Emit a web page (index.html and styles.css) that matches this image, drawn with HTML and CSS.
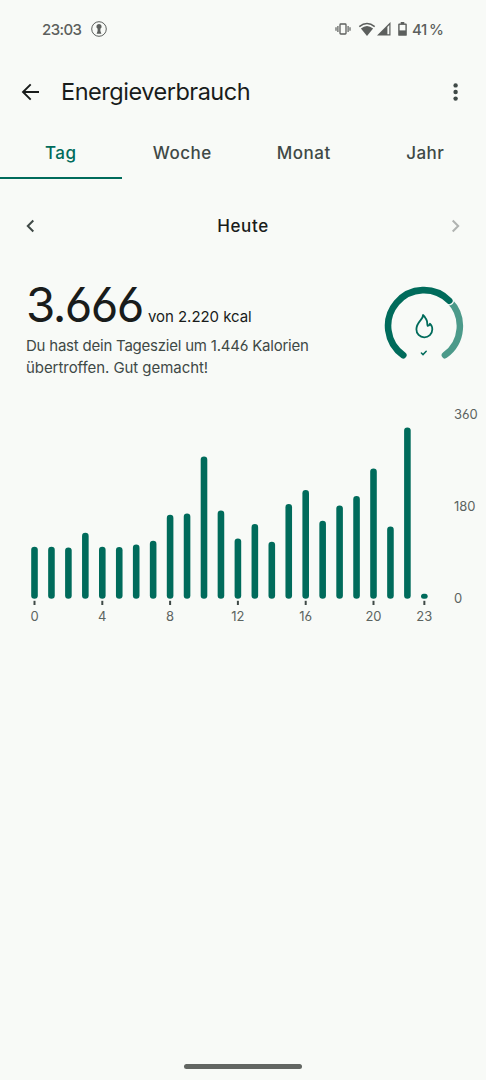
FILE: index.html
```html
<!DOCTYPE html>
<html lang="de">
<head>
  <meta charset="UTF-8" />
  <meta name="viewport" content="width=device-width, initial-scale=1.0"/>
  <title>Energieverbrauch</title>
  <link rel="stylesheet" href="styles.css">
</head>
<body>

  <div class="status-bar">
    <span class="clock">23:03</span>
    <svg class="icon-key" width="16" height="16" viewBox="0 0 16 16">
      <circle cx="8" cy="8" r="7.3" fill="none" stroke="#5c5f5d" stroke-width="1"/>
      <path d="M8 3a2.6 2.6 0 0 0-1.4 4.8V10l-1 2.8h4.8L9.4 10V7.8A2.6 2.6 0 0 0 8 3z" fill="#5c5f5d"/>
    </svg>
    <svg class="icon-vibrate" width="16" height="12" viewBox="0 0 16 12">
      <rect x="5" y="1" width="6" height="10" rx=".8" fill="none" stroke="#5c5f5d" stroke-width="1.3"/>
      <path d="M2.9 3v6M1 4.3v3.4M13.1 3v6M15 4.3v3.4" stroke="#5c5f5d" stroke-width="1.2"/>
    </svg>
    <svg class="icon-wifi" width="18" height="15" viewBox="0 0 18 15">
      <path d="M1.3 4.7Q9-1.7 16.7 4.7" fill="none" stroke="#5c5f5d" stroke-width="1.5"/>
      <path d="M2.9 6.6Q9 1.2 15.1 6.6L9 14z" fill="#5c5f5d"/>
    </svg>
    <svg class="icon-signal" width="14" height="14" viewBox="0 0 14 14">
      <path d="M13.5 0v13.5H0z" fill="#5c5f5d"/>
      <path d="M10.4 4.9l1.9-1.9v9.3h-1.9z" fill="#f8faf7"/>
    </svg>
    <svg class="icon-battery" width="9" height="14" viewBox="0 0 9 14">
      <path d="M2.7 0h3.6v1.5h1.6q.9 0 .9.9v10.5q0 .9-.9.9H1.100q-.9 0-.9-.9V2.400q0-.9.9-.9h1.600z" fill="#5c5f5d"/>
      <path d="M1.600 2.900h5.800v5.500H1.600z" fill="#f8faf7"/>
    </svg>
    <span class="battery-text">41&#8201;%</span>
  </div>

  <header class="top-bar">
    <svg width="18" height="18" viewBox="0 0 18 18" fill="none" stroke="#191c1b" stroke-width="1.9">
      <path d="M18 9H2M9.7 1.3L2 9l7.7 7.7"/>
    </svg>
    <h1>Energieverbrauch</h1>
    <svg class="menu" width="6" height="18" viewBox="0 0 6 18" fill="#3f4946">
      <circle cx="2.6" cy="2.4" r="2.2"/><circle cx="2.6" cy="9" r="2.2"/><circle cx="2.6" cy="15.6" r="2.2"/>
    </svg>
  </header>

  <nav class="tabs">
    <a class="tab active">Tag</a>
    <a class="tab">Woche</a>
    <a class="tab">Monat</a>
    <a class="tab">Jahr</a>
  </nav>

  <div class="day-nav">
    <svg width="9" height="14" viewBox="0 0 9 14" fill="none" stroke="#3f4946" stroke-width="2">
      <path d="M7.3 1.5L1.8 7l5.5 5.5"/>
    </svg>
    <span class="day">Heute</span>
    <svg width="9" height="14" viewBox="0 0 9 14" fill="none" stroke="#b0b3b1" stroke-width="2">
      <path d="M1.7 1.5L7.2 7l-5.500 5.500"/>
    </svg>
  </div>

  <section class="summary">
    <div class="summary-text">
      <div class="total"><span class="value">3.666</span><span class="goal">von 2.220 kcal</span></div>
      <p class="line-1">Du hast dein Tagesziel um 1.446 Kalorien</p>
      <p class="line-2">übertroffen. Gut gemacht!</p>
    </div>
    <svg class="gauge" width="80" height="76" viewBox="0 0 80 76" fill="none" stroke-linecap="round">
      <path d="M65.3 14.7A35.8 35.8 0 0 1 60.9 69.2" stroke="#4c9a8a" stroke-width="6.5"/>
      <path d="M19.3 69.2A35.8 35.8 0 1 1 65.3 14.7" stroke="#f8faf7" stroke-width="9.5"/>
      <path d="M19.3 69.2A35.8 35.8 0 1 1 65.3 14.7" stroke="#006b5b" stroke-width="6.6"/>
      <path d="M39 29c.6 4.400-6.600 6.600-6.600 14.200a7.900 7.900 0 0 0 15.900.3c0-2.200-.9-4.600-2.400-5.800-.2 1.300-.9 2-2.200 2.200-1-2.300.2-3.700-1.500-6.600-.6-1.500-1.800-3.100-3.200-4.300z" stroke="#006b5b" stroke-width="1.800" stroke-linejoin="round"/>
      <path d="M37.400 67l1.600 1.600 3.200-3.300" stroke="#006b5b" stroke-width="1.500"/>
    </svg>
  </section>

  <section class="chart">
    <svg id="hours" width="420" height="220" viewBox="0 0 420 220"></svg>
    <div class="scale">
      <span>360</span>
      <span>180</span>
      <span>0</span>
    </div>
  </section>

  <div class="home-indicator"></div>

  <script>
    // Balkenhöhe pro Stunde in px
    const heights = [52, 52, 51.3, 66, 52, 51.7, 54.3, 58, 84, 85.3, 142.3, 88.3,
      60.3, 74.7, 57, 94.7, 108.7, 78, 93.3, 102.7, 130.3, 72.3, 171.3, 5];
    const labels = [0, 4, 8, 12, 16, 20, 23];
    const baseline = 192.8;
    const barWidth = 6.6;
    let content = "";

    heights.forEach((height, hour) => {
      const x = 14.5 + hour * 16.95;
      content += `<rect class="bar" x="${x - barWidth / 2}" y="${baseline - height}" width="${barWidth}" height="${height}" rx="${Math.min(3.3, height / 2)}"/>`;
      if (labels.includes(hour)) {
        content += `<rect class="tick" x="${x - 1}" y="${baseline + 2}" width="2" height="4.2"/>`;
        content += `<text class="hour-label" x="${x}" y="214.5">${hour}</text>`;
      }
    });

    document.getElementById("hours").innerHTML = content;
  </script>
</body>
</html>
```
FILE: styles.css
```css
* {
  box-sizing: border-box;
}

body {
  margin: 0;
  height: 1080px;
  display: flex;
  flex-direction: column;
  background-color: #f8faf7;
  color: #191c1b;
  font-family: Inter, Roboto, sans-serif;
  font-feature-settings: "cv03", "cv04";
  overflow: hidden;
}

svg {
  display: block;
  flex: none;
}

.status-bar {
  display: flex;
  align-items: center;
  height: 58px;
  padding: 0 43px 0 42px;
  color: #5c5f5d;
  font-size: 15px;
  font-weight: 500;
}

.clock {
  width: 49px;
  white-space: nowrap;
  letter-spacing: -0.6px;
}

.icon-vibrate {
  margin-left: auto;
}

.icon-wifi {
  margin-left: 7px;
}

.icon-signal {
  margin-left: 1px;
}

.icon-battery {
  margin-left: 7px;
}

.battery-text {
  width: 31px;
  margin-left: 5px;
  white-space: nowrap;
  letter-spacing: -0.4px;
}

.top-bar {
  display: flex;
  align-items: center;
  height: 68px;
  padding: 0 27px 0 21px;
}

.top-bar h1 {
  margin: 0 0 2px 22px;
  font-size: 23.5px;
  font-weight: 400;
  letter-spacing: -0.48px;
}

.menu {
  margin-left: auto;
}

.tabs {
  display: flex;
  height: 53px;
}

.tab {
  flex: 1;
  height: 53px;
  line-height: 54px;
  text-align: center;
  font-size: 17px;
  font-weight: 500;
  letter-spacing: 0.5px;
  color: #3f4946;
}

.active {
  color: #006b5b;
  border-bottom: 2px solid #006b5b;
}

.day-nav {
  display: flex;
  align-items: center;
  justify-content: space-between;
  height: 94px;
  padding: 0 26px;
}

.day {
  font-size: 17px;
  font-weight: 500;
  letter-spacing: 0.6px;
}

.summary {
  display: flex;
  justify-content: space-between;
  height: 133px;
  padding: 13px 22px 0 26px;
}

.total {
  display: flex;
  align-items: baseline;
  height: 49px;
  line-height: 37px;
}

.value {
  width: 122px;
  font-size: 47.5px;
  letter-spacing: -1.6px;
}

.goal {
  font-size: 15px;
  letter-spacing: -0.05px;
}

.summary p {
  margin: 0;
  font-size: 15px;
  line-height: 22px;
  color: #3f4946;
  white-space: nowrap;
}

.summary .line-1 {
  letter-spacing: -0.22px;
}

.summary .line-2 {
  letter-spacing: -0.06px;
}

.chart {
  display: flex;
  height: 220px;
  padding-left: 20px;
  color: #5c6461;
  font-size: 13px;
}

.bar {
  fill: #006b5b;
}

.tick {
  fill: #3f4946;
}

.hour-label {
  fill: #5c6461;
  text-anchor: middle;
}

.scale {
  display: flex;
  flex-direction: column;
  justify-content: space-between;
  height: 200px;
  margin-left: 14px;
  line-height: 16px;
}

.home-indicator {
  width: 118px;
  height: 5px;
  margin: auto auto 11px;
  border-radius: 3px;
  background-color: #626662;
}
```
